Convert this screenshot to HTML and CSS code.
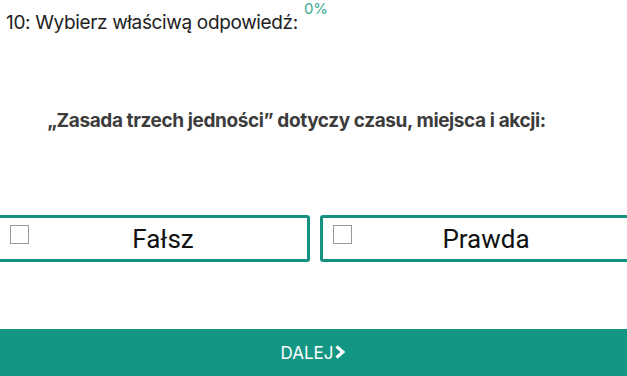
FILE: index.html
```html
<!DOCTYPE html>
<html>
<head>
    <title>Quiz</title>
    <meta charset="UTF-8">
    <meta name="viewport" content="width=device-width, initial-scale=1.0">
    <link rel="stylesheet" href="styles.css">
</head>
<body>
    <div class="quiz">
        <div class="head">
            <span class="title">10: Wybierz właściwą odpowiedź:</span>
            <span class="progress">0%</span>
        </div>

        <p class="question">„Zasada trzech jedności” dotyczy czasu, miejsca i akcji:</p>

        <div class="answers">
            <label class="answer">
                <span class="box"></span>
                <span class="text">Fałsz</span>
            </label>
            <label class="answer">
                <span class="box"></span>
                <span class="text">Prawda</span>
            </label>
        </div>
    </div>

    <div class="next">
        DALEJ
        <svg class="chevron" viewBox="0 0 12 14" width="12" height="14">
            <path d="M2.5 1.5 L9 7 L2.5 12.5" fill="none" stroke="white" stroke-width="3" stroke-linejoin="miter"/>
        </svg>
    </div>
</body>
</html>
```

FILE: styles.css
```css
html, body {
    height: 100%;
}
body {
    margin: 0;
    font-family: Inter, "Noto Sans", sans-serif;
    background-color: white;
    color: #222;
    display: flex;
    flex-direction: column;
    overflow: hidden;
}
.quiz {
    flex: 1;
}
.head {
    padding: 11px 0 0 6px;
    display: flex;
    align-items: flex-start;
}
.title {
    font-size: 19px;
    line-height: 24px;
    letter-spacing: -0.35px;
}
.progress {
    color: #3aa995;
    font-size: 15px;
    line-height: 14px;
    margin: -9px 0 0 6px;
}
.question {
    margin: 74px 0 0;
    padding-right: 34px;
    text-align: center;
    font-size: 19px;
    line-height: 24px;
    letter-spacing: -0.4px;
    font-weight: bold;
    color: #3c3c3c;
}
.answers {
    margin: 82px -6px 0 -3px;
    display: grid;
    grid-template-columns: 1fr 1fr;
    gap: 10px;
}
.answer {
    height: 41px;
    border: 3px solid #16907f;
    border-radius: 3px;
    display: flex;
    align-items: center;
    padding: 0 10px;
}
.box {
    width: 17px;
    height: 17px;
    border: 1px solid #9a9a9a;
    align-self: flex-start;
    margin-top: 7px;
}
.text {
    flex: 1;
    text-align: center;
    font-family: Roboto, sans-serif;
    font-size: 26px;
    color: #111;
}
.next {
    height: 47px;
    background-color: #139683;
    color: white;
    display: flex;
    align-items: center;
    justify-content: center;
    font-size: 17px;
    gap: 1px;
}
.chevron {
    margin-top: -1px;
}
```
